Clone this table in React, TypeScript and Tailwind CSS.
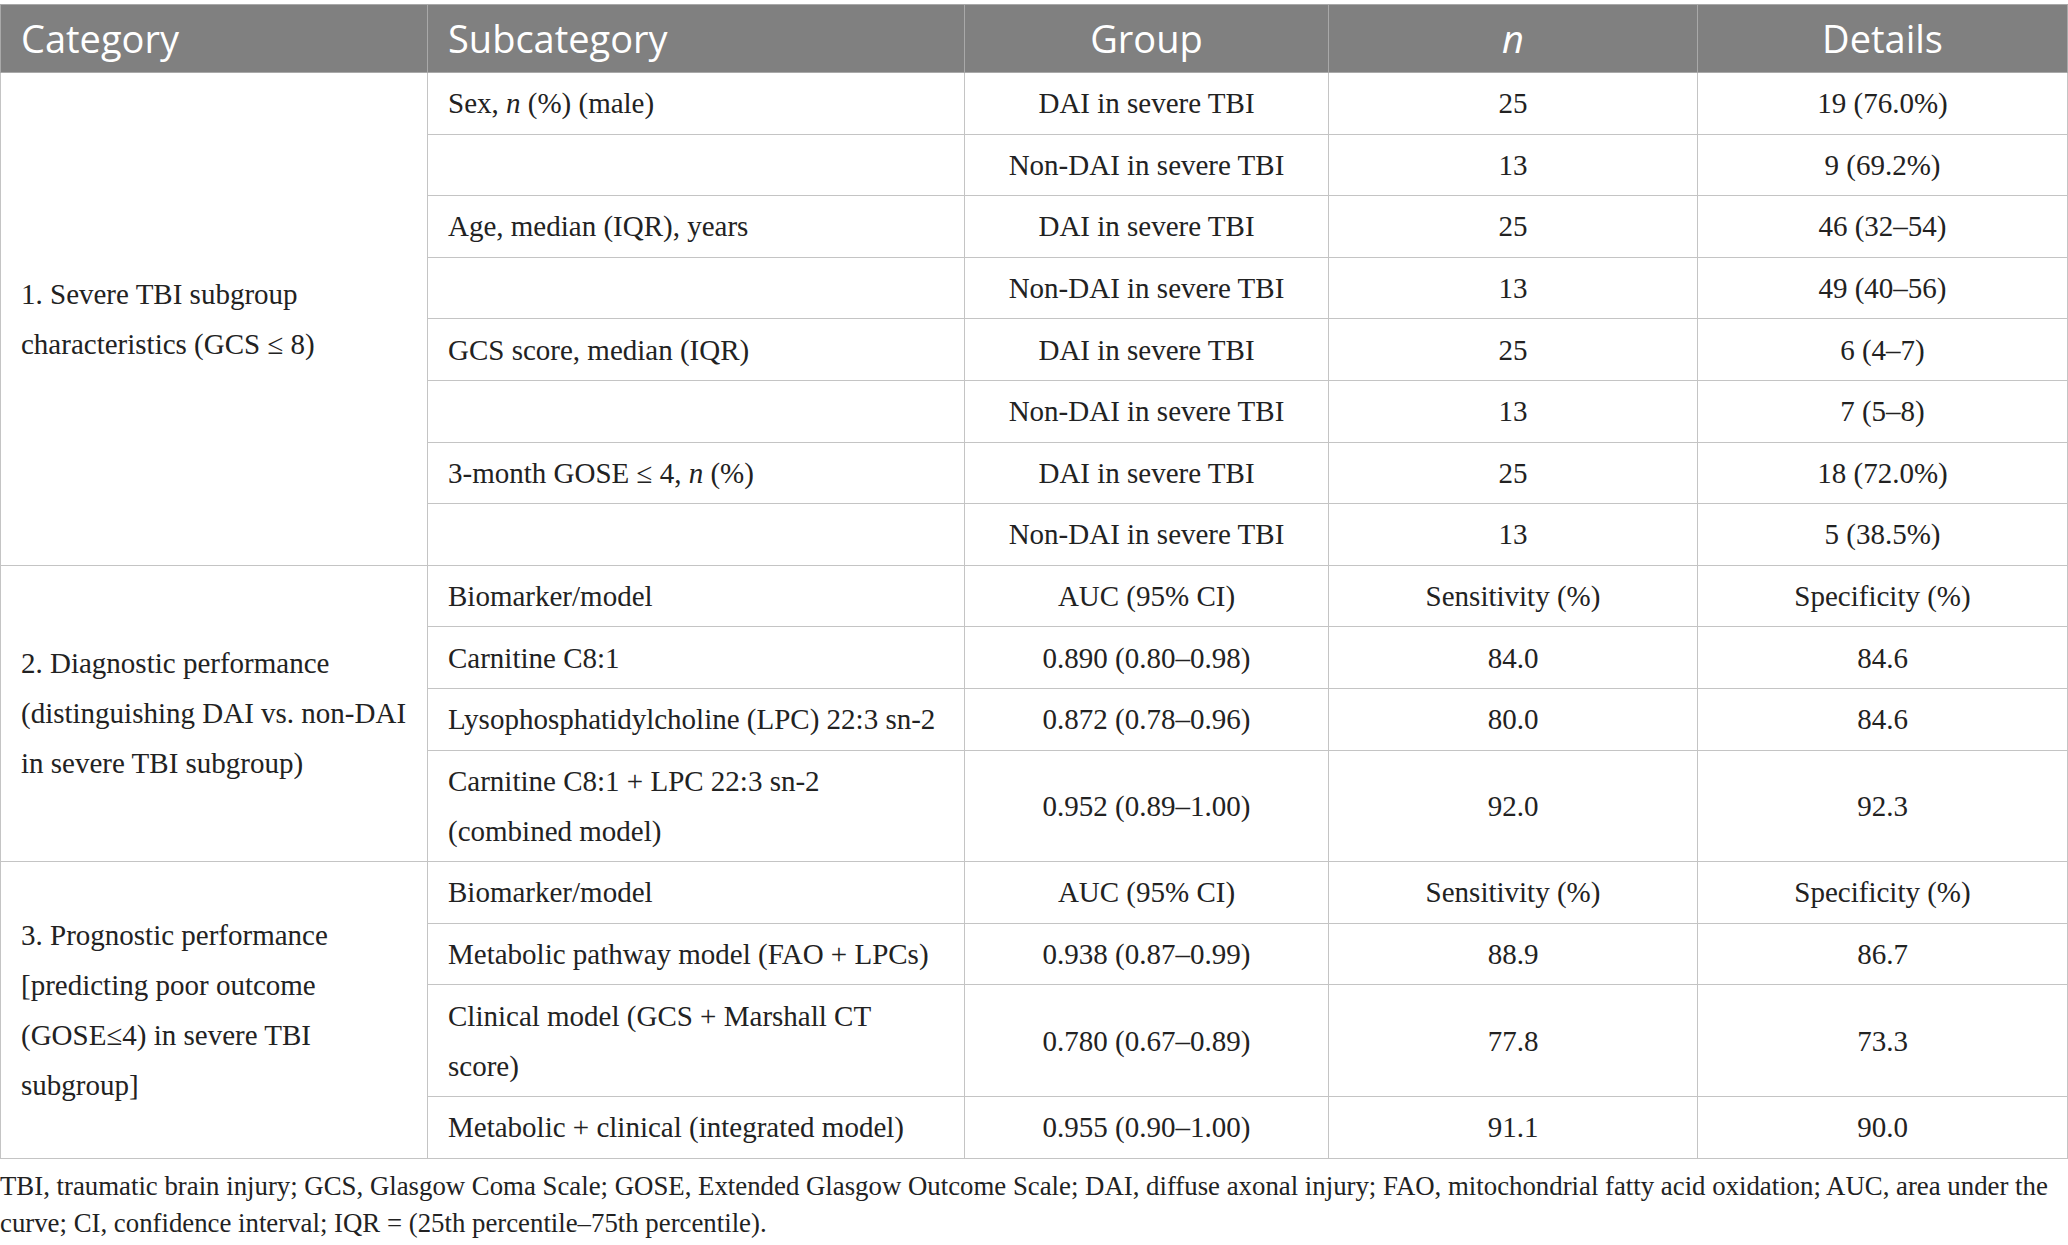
import React from "react";

const serif = { fontFamily: '"Liberation Serif", "Times New Roman", serif' };

type Row = { sub?: React.ReactNode; g: string; n: string; d: string };

const td = "border border-[#c4c4c4] px-[20px] py-[5.3px] leading-[50px] align-middle";

function Section({ label, rows }: { label: React.ReactNode; rows: Row[] }) {
  return (
    <>
      {rows.map((r, i) => (
        <tr key={i}>
          {i === 0 && (
            <td rowSpan={rows.length} className={td + " text-left"}>
              {label}
            </td>
          )}
          <td className={td + " text-left"}>{r.sub}</td>
          <td className={td + " text-center"}>{r.g}</td>
          <td className={td + " text-center"}>{r.n}</td>
          <td className={td + " text-center"}>{r.d}</td>
        </tr>
      ))}
    </>
  );
}

export default function App() {
  const dai = "DAI in severe TBI";
  const non = "Non-DAI in severe TBI";
  return (
    <div className="bg-white min-h-screen w-[2068px] text-[#222]" style={serif}>
      <div className="pt-[4px]">
        <table className="w-[2067px] table-fixed border-collapse text-[29px]">
          <colgroup>
            <col className="w-[427px]" />
            <col className="w-[537px]" />
            <col className="w-[364px]" />
            <col className="w-[369px]" />
            <col className="w-[370px]" />
          </colgroup>
          <thead>
            <tr
              className="bg-[#808080] text-white text-[38px] h-[68px]"
              style={{ fontFamily: '"Open Sans", "Noto Sans", sans-serif' }}
            >
              <th className="border border-[#a9a9a9] px-[20px] text-left font-normal">Category</th>
              <th className="border border-[#a9a9a9] px-[20px] text-left font-normal">Subcategory</th>
              <th className="border border-[#a9a9a9] px-[20px] text-center font-normal">Group</th>
              <th className="border border-[#a9a9a9] px-[20px] text-center font-normal italic">n</th>
              <th className="border border-[#a9a9a9] px-[20px] text-center font-normal">Details</th>
            </tr>
          </thead>
          <tbody>
            <Section
              label={
                <>
                  1. Severe TBI subgroup
                  <br />
                  characteristics (GCS ≤ 8)
                </>
              }
              rows={[
                { sub: <>Sex, <i>n</i> (%) (male)</>, g: dai, n: "25", d: "19 (76.0%)" },
                { g: non, n: "13", d: "9 (69.2%)" },
                { sub: "Age, median (IQR), years", g: dai, n: "25", d: "46 (32–54)" },
                { g: non, n: "13", d: "49 (40–56)" },
                { sub: "GCS score, median (IQR)", g: dai, n: "25", d: "6 (4–7)" },
                { g: non, n: "13", d: "7 (5–8)" },
                { sub: <>3-month GOSE ≤ 4, <i>n</i> (%)</>, g: dai, n: "25", d: "18 (72.0%)" },
                { g: non, n: "13", d: "5 (38.5%)" },
              ]}
            />
            <Section
              label={
                <>
                  2. Diagnostic performance
                  <br />
                  (distinguishing DAI vs. non-DAI
                  <br />
                  in severe TBI subgroup)
                </>
              }
              rows={[
                { sub: "Biomarker/model", g: "AUC (95% CI)", n: "Sensitivity (%)", d: "Specificity (%)" },
                { sub: "Carnitine C8:1", g: "0.890 (0.80–0.98)", n: "84.0", d: "84.6" },
                { sub: "Lysophosphatidylcholine (LPC) 22:3 sn-2", g: "0.872 (0.78–0.96)", n: "80.0", d: "84.6" },
                {
                  sub: (
                    <>
                      Carnitine C8:1 + LPC 22:3 sn-2
                      <br />
                      (combined model)
                    </>
                  ),
                  g: "0.952 (0.89–1.00)",
                  n: "92.0",
                  d: "92.3",
                },
              ]}
            />
            <Section
              label={
                <>
                  3. Prognostic performance
                  <br />
                  [predicting poor outcome
                  <br />
                  (GOSE≤4) in severe TBI
                  <br />
                  subgroup]
                </>
              }
              rows={[
                { sub: "Biomarker/model", g: "AUC (95% CI)", n: "Sensitivity (%)", d: "Specificity (%)" },
                { sub: "Metabolic pathway model (FAO + LPCs)", g: "0.938 (0.87–0.99)", n: "88.9", d: "86.7" },
                {
                  sub: (
                    <>
                      Clinical model (GCS + Marshall CT
                      <br />
                      score)
                    </>
                  ),
                  g: "0.780 (0.67–0.89)",
                  n: "77.8",
                  d: "73.3",
                },
                { sub: "Metabolic + clinical (integrated model)", g: "0.955 (0.90–1.00)", n: "91.1", d: "90.0" },
              ]}
            />
          </tbody>
        </table>
        <p className="mt-[9px] text-[26.8px] leading-[37px] whitespace-nowrap">
          TBI, traumatic brain injury; GCS, Glasgow Coma Scale; GOSE, Extended Glasgow Outcome Scale; DAI, diffuse
          axonal injury; FAO, mitochondrial fatty acid oxidation; AUC, area under the
          <br />
          curve; CI, confidence interval; IQR = (25th percentile–75th percentile).
        </p>
      </div>
    </div>
  );
}
